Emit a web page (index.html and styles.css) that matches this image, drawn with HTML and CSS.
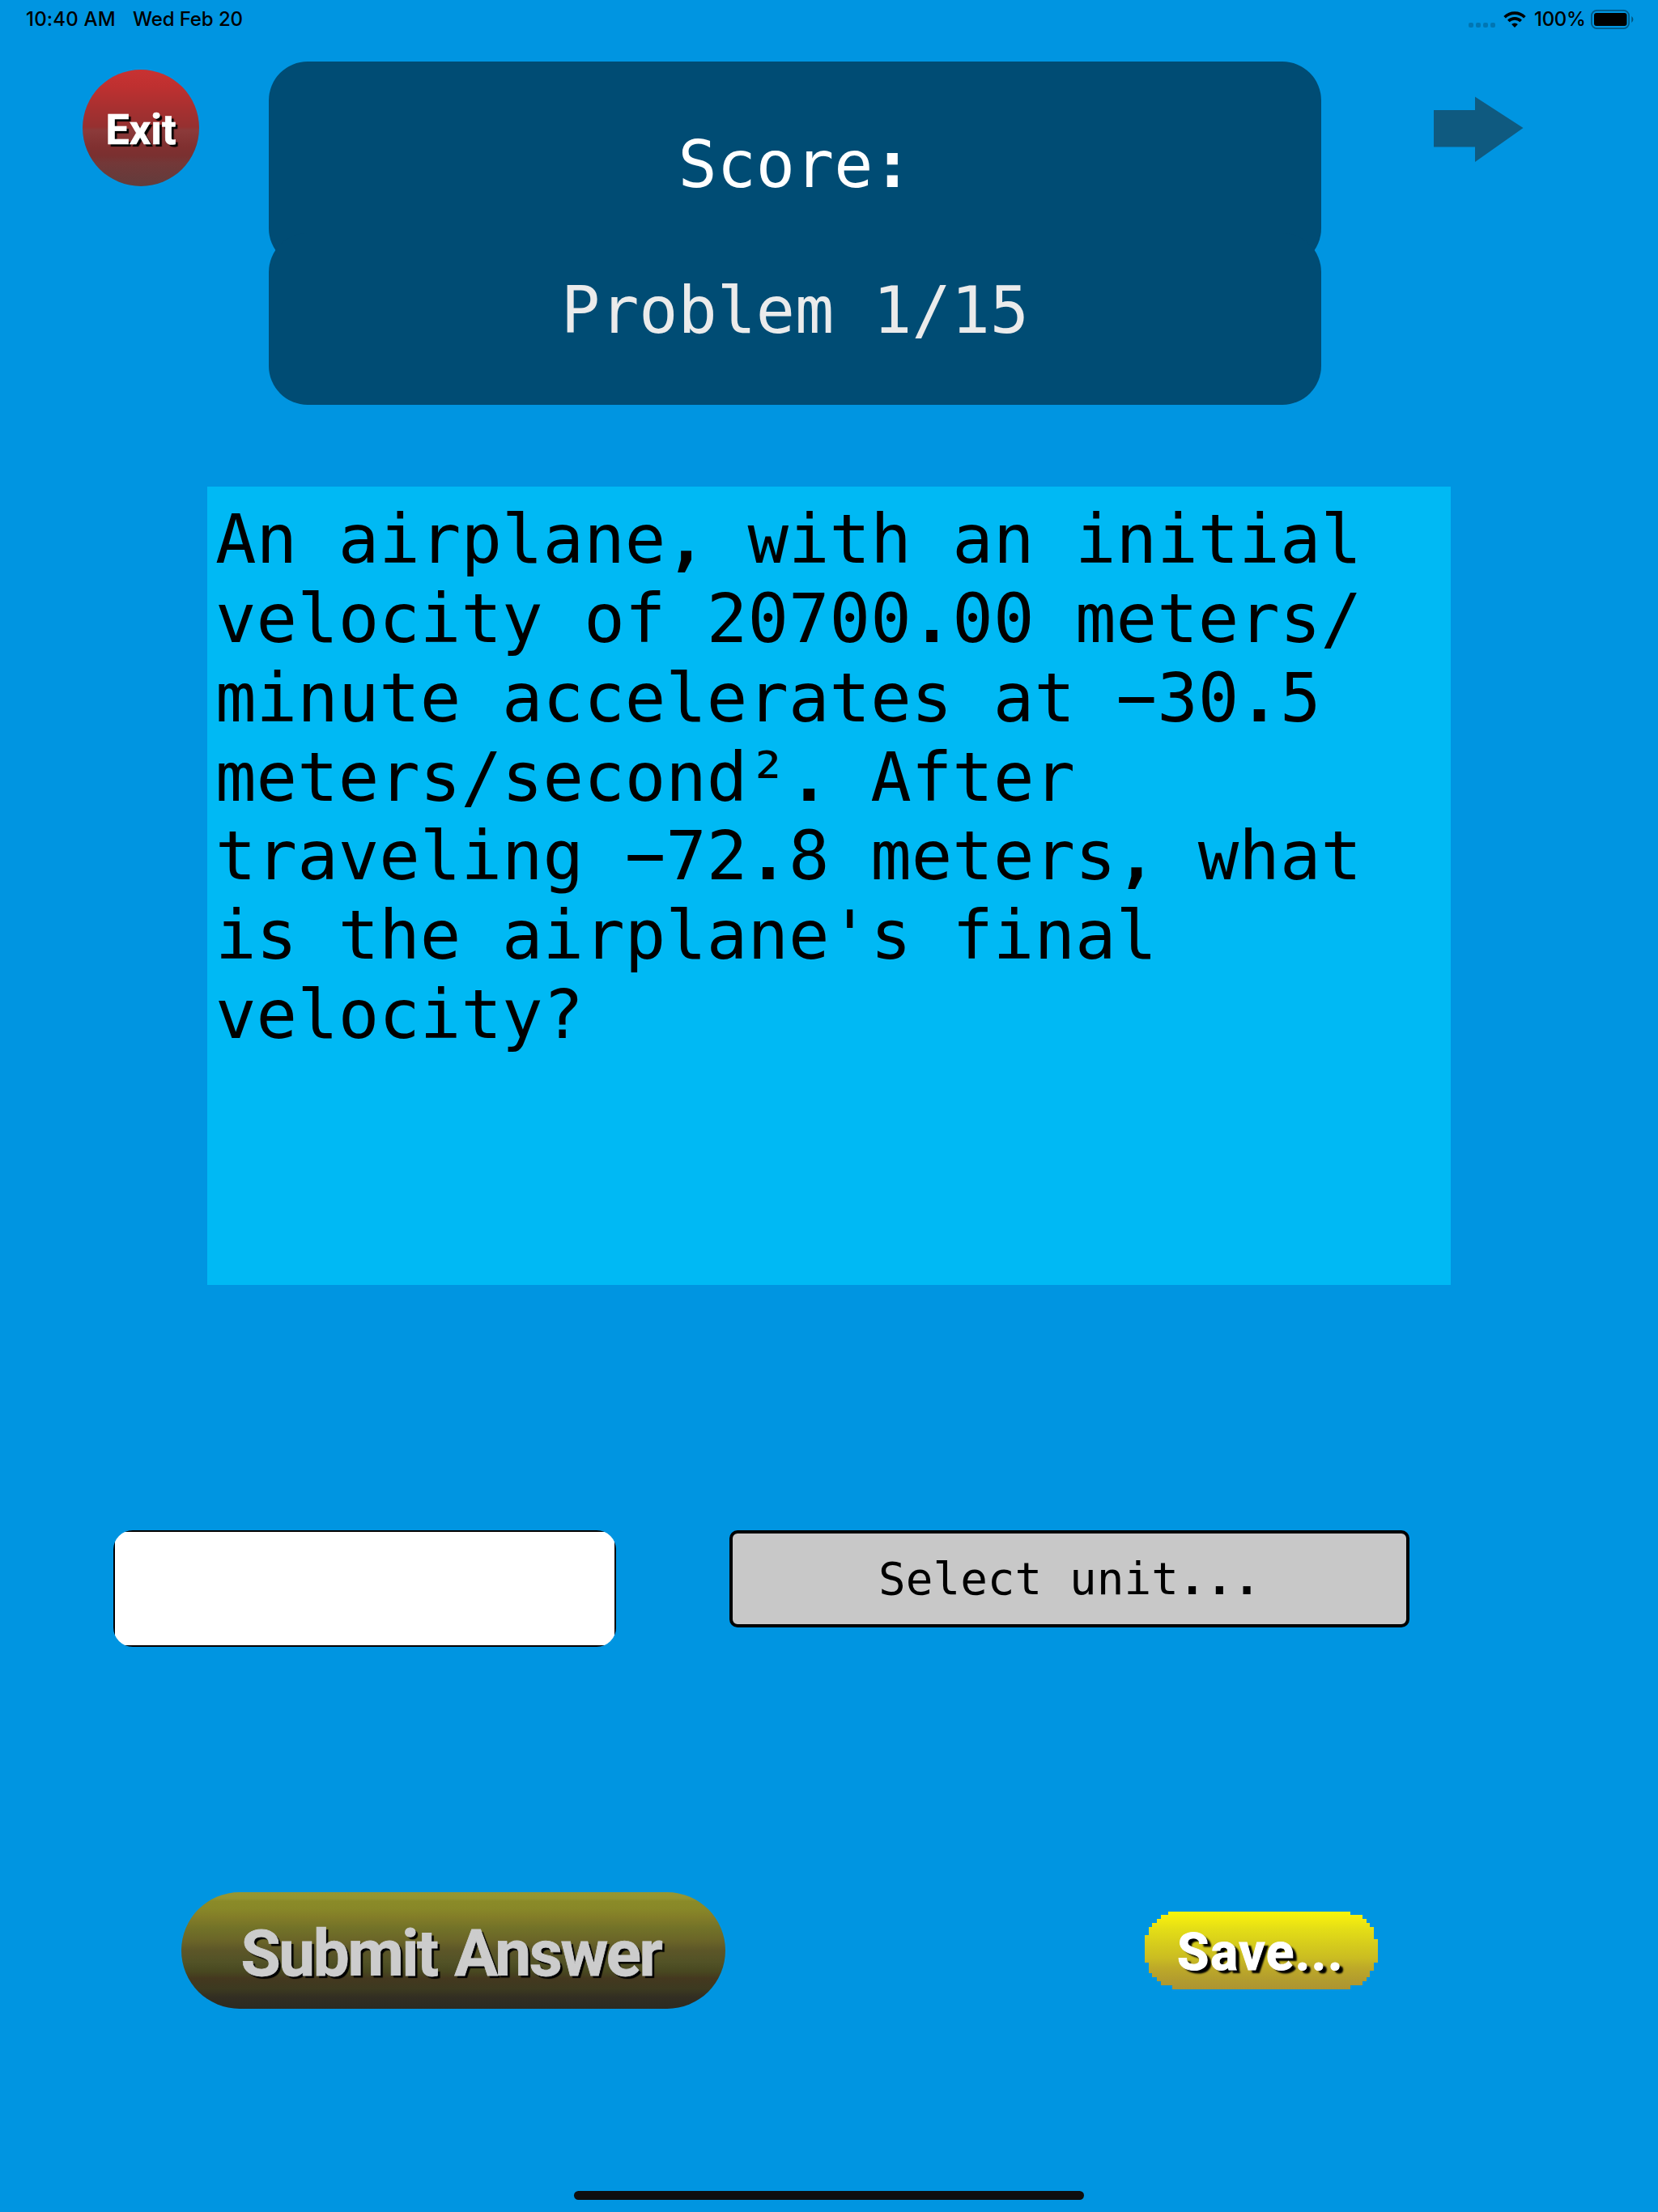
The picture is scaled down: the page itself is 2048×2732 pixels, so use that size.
FILE: index.html
```html
<!DOCTYPE html>
<html lang="en">
<head>
<meta charset="utf-8">
<title>Physics Problem</title>
<link rel="stylesheet" href="styles.css">
</head>
<body>
<div class="status">
  <div class="status-left"><span class="time">10:40 AM</span><span class="date">Wed Feb 20</span></div>
  <div class="status-right">
    <svg class="dots" width="33" height="6" viewBox="0 0 33 6"><g fill="#000" opacity=".2"><rect width="6" height="6" rx="2"/><rect x="9" width="6" height="6" rx="2"/><rect x="18" width="6" height="6" rx="2"/><rect x="27" width="6" height="6" rx="2"/></g></svg>
    <svg class="wifi" width="28" height="20" viewBox="0 0 28 20"><g fill="none" stroke="#000" stroke-width="3.6"><path d="M1.6 7.2A17.6 17.6 0 0 1 26.4 7.2"/><path d="M6.3 12A11 11 0 0 1 21.7 12"/></g><path d="M10.1 16a5.6 5.6 0 0 1 7.8 0L14 20z"/></svg>
    <span class="percent">100%</span>
    <svg class="battery" width="54" height="24" viewBox="0 0 54 24"><rect x=".9" y=".9" width="46.2" height="22.2" rx="6.5" fill="none" stroke="#000" stroke-opacity=".4" stroke-width="1.8"/><rect x="4" y="4" width="40.5" height="16" rx="3"/><path d="M50.3 8v8a4.8 4.8 0 0 0 0-8z" opacity=".45"/></svg>
  </div>
</div>
<header class="header">
  <button class="exit"><span>Exit</span></button>
  <div class="panels">
    <div class="panel score">Score<b>:</b></div>
    <div class="panel progress">Problem 1/15</div>
  </div>
  <svg class="next" width="111" height="82" viewBox="0 0 111 82"><path d="M0 17H51V0.5L110.500 39L51 81V62.500H0z" fill="#0f5a80"/></svg>
</header>
<main>
  <div class="question">An airplane<b>,</b> with an initial<br>velocity of 20700<b>.</b>00 meters/<br>minute accelerates at −30<b>.</b>5<br>meters/second²<b>.</b> After<br>traveling −72<b>.</b>8 meters<b>,</b> what<br>is the airplane's final<br>velocity?</div>
  <div class="answer">
    <input class="value" type="text" aria-label="Answer">
    <button class="unit">Select unit<b>...</b></button>
  </div>
  <div class="actions">
    <button class="submit"><span>Submit Answer</span></button>
    <button class="save"><span>Save...</span></button>
  </div>
</main>
<div class="home"></div>
</body>
</html>
```

FILE: styles.css
```css
* { box-sizing: border-box; }
body {
  margin: 0;
  width: 2048px;
  height: 2732px;
  background: #0095e1;
  color: #000;
  font-family: "DejaVu Sans Mono", monospace;
  display: flex;
  flex-direction: column;
  overflow: hidden;
}
button, input { border: 0; padding: 0; margin: 0; font-family: inherit; appearance: none; }
svg { display: block; flex: none; }

.status {
  height: 76px;
  flex: none;
  display: flex;
  justify-content: space-between;
  padding: 0 29px 0 32px;
  font: 500 24px/48px Inter, sans-serif;
  white-space: nowrap;
}
.status-left, .status-right { display: flex; }
.status-left { gap: 21px; }
.time { letter-spacing: 0.2px; }
.date { letter-spacing: -0.1px; }
.dots { margin: 28px 10px 0 0; }
.wifi { margin: 14px 10px 0 0; }
.percent { width: 70px; letter-spacing: -0.3px; }
.battery { margin-top: 12px; }

.header {
  display: flex;
  align-items: flex-start;
  height: 525px;
  flex: none;
  padding-left: 102px;
}
.exit {
  width: 144px;
  height: 144px;
  margin: 10px 86px 0 0;
  border-radius: 50%;
  background: linear-gradient(#c83232, #be3030 15%, #a53030 35%, #963030 49%, #8c3a3a 52%, #803030 66%, #7a3030 74%, #733838 80%, #623c3c);
  color: #fff;
  font: bold 52px/60px Roboto, sans-serif;
  padding-top: 5px;
  -webkit-text-stroke: 0.6px #fff;
  text-shadow: 3px 3px 1px #000;
}
.panels { width: 1300px; }
.panel {
  display: flex;
  align-items: center;
  justify-content: center;
  border-radius: 48px;
  background: #004c74;
  font-size: 80px;
}
.score { height: 254px; color: #fff; }
.progress { height: 212px; margin-top: -42px; padding-bottom: 21px; color: #ebebeb; }
.next { margin: 43px 0 0 139px; }

main { flex: 1; }
.question {
  width: 1536px;
  height: 986px;
  margin-left: 256px;
  padding: 17px 10px;
  background: #00b9f4;
  font-size: 84px;
  line-height: 97.85px;
  white-space: nowrap;
}
.answer {
  display: flex;
  align-items: flex-start;
  gap: 140px;
  margin: 303px 0 0 140px;
}
.value {
  width: 621px;
  height: 144px;
  border-radius: 24px;
  background: linear-gradient(#fff, #fff) center / calc(100% - 4px) calc(100% - 4px) no-repeat #000;
}
.unit {
  width: 840px;
  height: 120px;
  border: 4px solid #000;
  border-radius: 10px;
  background: #c8c8c8;
  color: #000;
  font-size: 56px;
  padding-bottom: 2px;
}
.actions {
  display: flex;
  align-items: center;
  gap: 518px;
  margin: 303px 0 0 224px;
}
.submit, .save { font-family: Roboto, sans-serif; font-weight: bold; white-space: nowrap; }
.submit {
  width: 672px;
  height: 144px;
  border-radius: 72px;
  background: linear-gradient(#969632, #949430 5%, #8a8a28 8%, #888828 14%, #827c28 22%, #727228 31%, #6a6428 42%, #5c5628 50%, #525226 60%, #484820 68%, #44381f 74%, #3c3a20 83%, #322e22 90%, #2c2a22);
  color: #ccc;
  font-size: 80px;
  letter-spacing: -2.4px;
  word-spacing: 4px;
  padding: 8px 6px 0 0;
  -webkit-text-stroke: 0.8px #ccc;
  text-shadow: 3px 3px 1px #000;
}
.save {
  width: 288px;
  height: 96px;
  background: linear-gradient(#f8f60a, #f2ea10 10%, #e4de16 22%, #d6cc1c 42%, #cabc22 60%, #beaa28 72%, #b29c2e 88%, #ac9432);
  clip-path: polygon(29px 0, 29px 4px, 20px 4px, 20px 9px, 15px 9px, 15px 14px, 9px 14px, 9px 19px, 5px 19px, 5px 29px, 0 29px, 0 63px, 5px 63px, 5px 76px, 9px 76px, 9px 81px, 15px 81px, 15px 86px, 20px 86px, 20px 91px, 34px 91px, 34px 96px, 254px 96px, 254px 91px, 269px 91px, 269px 86px, 274px 86px, 274px 81px, 278px 81px, 278px 73px, 283px 73px, 283px 63px, 288px 63px, 288px 34px, 283px 34px, 283px 19px, 278px 19px, 278px 14px, 274px 14px, 274px 9px, 269px 9px, 269px 4px, 254px 4px, 254px 0);
  color: #fff;
  font-size: 64px;
  letter-spacing: 1.5px;
  padding: 4px 2px 0 0;
  -webkit-text-stroke: 1px #fff;
  text-shadow: 5px 4px 2px #000;
}
.home {
  width: 630px;
  height: 11px;
  border-radius: 6px;
  background: #0e0e0e;
  margin: 0 0 15px 709px;
  flex: none;
}
```
